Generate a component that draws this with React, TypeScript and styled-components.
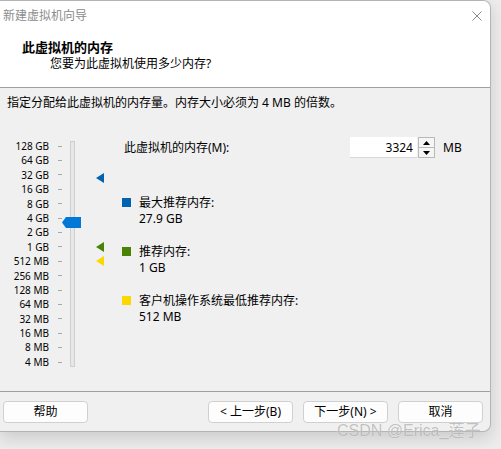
import React from "react";
import styled, { createGlobalStyle } from "styled-components";

const GlobalStyle = createGlobalStyle`
  html, body {
    margin: 0;
    padding: 0;
    background: #ececec;
  }
  body {
    font-family: "Noto Sans", "Noto Sans CJK SC", sans-serif;
    font-size: 12px;
    color: #000;
  }
`;

// 滑块刻度，从 128 GB 到 4 MB，每格对应 2 倍
const scaleLabels = [
  "128 GB",
  "64 GB",
  "32 GB",
  "16 GB",
  "8 GB",
  "4 GB",
  "2 GB",
  "1 GB",
  "512 MB",
  "256 MB",
  "128 MB",
  "64 MB",
  "32 MB",
  "16 MB",
  "8 MB",
  "4 MB",
];

const ROW_H = 14.4;
const TOP_MB = 131072;

const rowCenter = (mb: number) =>
  (Math.log2(TOP_MB) - Math.log2(mb)) * ROW_H + ROW_H / 2;

interface Hint {
  name: string;
  value: string;
  mb: number;
  color: string;
}

const hints: Hint[] = [
  { name: "最大推荐内存:", value: "27.9 GB", mb: 27.9 * 1024, color: "#0063b1" },
  { name: "推荐内存:", value: "1 GB", mb: 1024, color: "#498205" },
  {
    name: "客户机操作系统最低推荐内存:",
    value: "512 MB",
    mb: 512,
    color: "#fcd800",
  },
];

const memory = 3324;

const App = () => {
  return (
    <Page>
      <GlobalStyle />
      <Window>
        <Header>
          <TitleBar>
            <Title>新建虚拟机向导</Title>
            <Close>
              <svg width="10" height="10" viewBox="0 0 10 10">
                <path d="M0.5 0.5 L9.5 9.5 M9.5 0.5 L0.5 9.5" stroke="#8a8a8a" strokeWidth="1" />
              </svg>
            </Close>
          </TitleBar>
          <Heading>此虚拟机的内存</Heading>
          <SubHeading>您要为此虚拟机使用多少内存?</SubHeading>
        </Header>

        <Body>
          <Intro>指定分配给此虚拟机的内存量。内存大小必须为 4 MB 的倍数。</Intro>
          <Main>
            <SliderBlock>
              <Labels>
                {scaleLabels.map((l) => (
                  <ScaleLabel key={l}>{l}</ScaleLabel>
                ))}
              </Labels>
              <Ticks>
                {scaleLabels.map((l) => (
                  <Tick key={l} />
                ))}
              </Ticks>
              <Track />
              <Thumb style={{ top: rowCenter(memory) - 5.5 }}>
                <svg width="19" height="11" viewBox="0 0 19 11">
                  <path d="M4 0 H19 V11 H4 L0 5.5 Z" fill="#0078d7" />
                </svg>
              </Thumb>
              {hints.map((h) => (
                <Marker key={h.name} style={{ top: rowCenter(h.mb) - 5 }}>
                  <svg width="8" height="10" viewBox="0 0 8 10">
                    <path d="M8 0 V10 L0 5 Z" fill={h.color} />
                  </svg>
                </Marker>
              ))}
            </SliderBlock>

            <Panel>
              <MemRow>
                <MemLabel>此虚拟机的内存(M):</MemLabel>
                <MemInput>{memory}</MemInput>
                <Spinner>
                  <SpinButton>
                    <svg width="7" height="4" viewBox="0 0 7 4">
                      <path d="M0 4 L3.5 0 L7 4 Z" fill="#000" />
                    </svg>
                  </SpinButton>
                  <SpinButton>
                    <svg width="7" height="4" viewBox="0 0 7 4">
                      <path d="M0 0 L7 0 L3.5 4 Z" fill="#000" />
                    </svg>
                  </SpinButton>
                </Spinner>
                <Unit>MB</Unit>
              </MemRow>

              <HintList>
                {hints.map((h) => (
                  <HintItem key={h.name}>
                    <Swatch color={h.color} />
                    <HintText>
                      <div>{h.name}</div>
                      <div>{h.value}</div>
                    </HintText>
                  </HintItem>
                ))}
              </HintList>
            </Panel>
          </Main>
        </Body>

        <Footer>
          <Button>帮助</Button>
          <NavButtons>
            <Button>&lt; 上一步(B)</Button>
            <Button>下一步(N) &gt;</Button>
            <Button>取消</Button>
          </NavButtons>
        </Footer>
      </Window>
      <Watermark>CSDN @Erica_莲子</Watermark>
    </Page>
  );
};

const Page = styled.div`
  position: relative;
  width: 501px;
  height: 449px;
  overflow: hidden;
`;

const Window = styled.div`
  width: 491px;
  height: 432px;
  box-sizing: border-box;
  background: #f0f0f0;
  border: 1px solid #b4b4b4;
  border-left: none;
  border-radius: 0 8px 8px 0;
  box-shadow: 0 6px 16px rgba(0, 0, 0, 0.14);
  overflow: hidden;
  display: flex;
  flex-direction: column;
`;

const Header = styled.div`
  background: #fff;
  height: 86px;
  border-bottom: 1px solid #a0a0a0;
`;

const TitleBar = styled.div`
  height: 29px;
  display: flex;
  align-items: center;
  justify-content: space-between;
  padding: 0 8px 0 3px;
`;

const Title = styled.div`
  color: #8c8c8c;
  font-size: 12px;
  line-height: 16px;
`;

const Close = styled.div`
  display: flex;
  margin-top: 1px;
`;

const Heading = styled.div`
  margin: 8px 0 0 22px;
  font-size: 13px;
  font-weight: bold;
  line-height: 18px;
`;

const SubHeading = styled.div`
  margin-left: 50px;
  line-height: 16px;
`;

const Body = styled.div`
  height: 304px;
  padding: 7px 0 0 7px;
  box-sizing: border-box;
  border-bottom: 1px solid #a0a0a0;
`;

const Intro = styled.div`
  line-height: 16px;
`;

const Main = styled.div`
  display: flex;
  margin-top: 26px;
`;

const SliderBlock = styled.div`
  position: relative;
  display: flex;
  width: 115px;
  margin-top: 2px;
`;

const Labels = styled.div`
  width: 42px;
  display: flex;
  flex-direction: column;
`;

const ScaleLabel = styled.div`
  height: ${ROW_H}px;
  line-height: ${ROW_H}px;
  text-align: right;
  font-size: 10px;
  white-space: nowrap;
`;

const Ticks = styled.div`
  margin-left: 9px;
  width: 4px;
  display: flex;
  flex-direction: column;
`;

const Tick = styled.div`
  height: ${ROW_H}px;
  display: flex;
  align-items: center;

  &::before {
    content: "";
    width: 4px;
    height: 1px;
    background: #a8a8a8;
  }
`;

const Track = styled.div`
  margin: 2px 0 0 8px;
  width: 5px;
  height: 226px;
  box-sizing: border-box;
  background: #e7e7e7;
  border: 1px solid #cfcfcf;
`;

const Thumb = styled.div`
  position: absolute;
  left: 55px;
  display: flex;
`;

const Marker = styled.div`
  position: absolute;
  left: 89px;
  display: flex;
`;

const Panel = styled.div`
  display: flex;
  flex-direction: column;
`;

const MemRow = styled.div`
  display: flex;
  align-items: center;
  height: 21px;
  padding-left: 2px;
`;

const MemLabel = styled.div`
  width: 226px;
  line-height: 16px;
`;

const MemInput = styled.div`
  width: 67px;
  height: 21px;
  box-sizing: border-box;
  background: #fff;
  border-bottom: 1px solid #d8d8d8;
  text-align: right;
  padding-right: 4px;
  line-height: 21px;
`;

const Spinner = styled.div`
  width: 17px;
  height: 21px;
  box-sizing: border-box;
  margin-left: 1px;
  display: flex;
  flex-direction: column;
  border: 1px solid #b9b9b9;
  background: #f5f5f5;
`;

const SpinButton = styled.div`
  flex: 1;
  display: flex;
  align-items: center;
  justify-content: center;

  & + & {
    border-top: 1px solid #b9b9b9;
  }
`;

const Unit = styled.div`
  margin-left: 8px;
  line-height: 16px;
`;

const HintList = styled.div`
  display: flex;
  flex-direction: column;
  gap: 17px;
  margin-top: 37px;
`;

const HintItem = styled.div`
  display: flex;
  align-items: flex-start;
`;

const Swatch = styled.div<{ color: string }>`
  width: 9px;
  height: 9px;
  margin-top: 3px;
  background: ${(p) => p.color};
`;

const HintText = styled.div`
  margin-left: 8px;
  line-height: 16px;
`;

const Footer = styled.div`
  display: flex;
  justify-content: space-between;
  padding: 9px 7px 0 3px;
`;

const NavButtons = styled.div`
  display: flex;
  gap: 10px;
`;

const Button = styled.div`
  width: 85px;
  height: 22px;
  box-sizing: border-box;
  border: 1px solid #d0d0d0;
  border-radius: 4px;
  background: #fdfdfd;
  display: flex;
  align-items: center;
  justify-content: center;
  line-height: 16px;
`;

/* 水印：浅灰色半透明文字 */
const Watermark = styled.div`
  position: absolute;
  left: 337px;
  top: 421px;
  font-family: "Liberation Sans", "Noto Sans CJK SC", sans-serif;
  font-size: 16px;
  line-height: 20px;
  color: rgba(120, 120, 120, 0.45);
  text-shadow: 0 0 1px rgba(255, 255, 255, 0.8);
  white-space: nowrap;
`;

export default App;
